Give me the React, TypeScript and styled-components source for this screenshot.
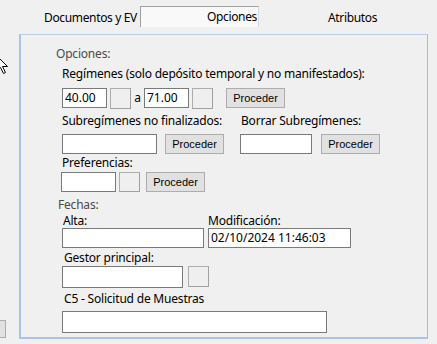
import styled, { createGlobalStyle } from "styled-components";

const GlobalStyle = createGlobalStyle`
    html, body {
        margin: 0;
        padding: 0;
        background: #f0f0f0;
    }
`;

const Page = styled.div`
    position: relative;
    width: 437px;
    height: 344px;
    overflow: hidden;
    background: #f0f0f0;
    display: flex;
    flex-direction: column;
    font-family: "Noto Sans", "Open Sans", sans-serif;
    font-size: 12px;
    letter-spacing: -0.2px;
    color: #000;
`;

const TabBar = styled.div`
    height: 34px;
    display: flex;
    align-items: flex-start;
    letter-spacing: -0.35px;
`;

const Tab = styled.div<{ $left: number; $w: number }>`
    margin-left: ${(p) => p.$left}px;
    width: ${(p) => p.$w}px;
    margin-top: 11px;
    line-height: 14px;
    white-space: nowrap;
`;

const ActiveTab = styled.div`
    margin-top: 6px;
    width: 119px;
    height: 21px;
    box-sizing: border-box;
    border-top: 1px solid #a0a0a0;
    border-left: 1px solid #a0a0a0;
    border-right: 1px solid #dadada;
    background: #f9f9f9;
    display: flex;
    align-items: center;
    justify-content: flex-end;
    padding-right: 1px;
    line-height: 14px;
`;

const Body = styled.div`
    display: flex;
    height: 306px;
`;

const Gutter = styled.div`
    width: 19px;
    display: flex;
    flex-direction: column;
    justify-content: flex-end;
    padding-bottom: 2px;
    box-sizing: border-box;
`;

const StubButton = styled.div`
    width: 5px;
    height: 16px;
    background: #e1e1e1;
    border: 1px solid #adadad;
    border-left: none;
`;

const Panel = styled.div`
    width: 409px;
    height: 305px;
    box-sizing: border-box;
    border-top: 1px solid #b9cde4;
    border-left: 2px solid #a9c4e4;
    border-right: 1px solid #aabdd4;
    border-bottom: 2px solid #a9c4e4;
    padding: 12px 0 0 41px;
    display: flex;
    flex-direction: column;
    align-items: flex-start;
`;

const Section = styled.div<{ $mt?: number }>`
    margin-left: -6px;
    margin-top: ${(p) => p.$mt ?? 0}px;
    line-height: 14px;
    color: #4a4a4a;
`;

const Label = styled.div<{ $mt?: number; $indent?: number }>`
    margin-top: ${(p) => p.$mt ?? 0}px;
    margin-left: ${(p) => p.$indent ?? 0}px;
    line-height: 14px;
    white-space: nowrap;
`;

const Row = styled.div<{ $mt?: number }>`
    margin-top: ${(p) => p.$mt ?? 0}px;
    display: flex;
    align-items: flex-start;
`;

const Group = styled.div<{ $ml?: number }>`
    margin-left: ${(p) => p.$ml ?? 0}px;
    display: flex;
    flex-direction: column;
    align-items: flex-start;
`;

const Input = styled.div<{ $w: number; $h?: number; $ml?: number; $mt?: number }>`
    width: ${(p) => p.$w}px;
    height: ${(p) => p.$h ?? 20}px;
    margin-left: ${(p) => p.$ml ?? 0}px;
    margin-top: ${(p) => p.$mt ?? 0}px;
    box-sizing: border-box;
    background: #fff;
    border: 1px solid #7a7a7a;
    padding-left: 2px;
    letter-spacing: 0;
    line-height: 18px;
    white-space: nowrap;
`;

const SquareButton = styled.div<{ $ml?: number; $h?: number }>`
    width: 21px;
    height: ${(p) => p.$h ?? 21}px;
    margin-left: ${(p) => p.$ml ?? 3}px;
    box-sizing: border-box;
    background: #efefef;
    border: 1px solid #adadad;
    border-right-color: #a0a0a0;
    border-bottom-color: #a0a0a0;
`;

const Button = styled.div<{ $ml: number; $h?: number }>`
    width: 59px;
    height: ${(p) => p.$h ?? 20}px;
    margin-left: ${(p) => p.$ml}px;
    box-sizing: border-box;
    background: #e1e1e1;
    border: 1px solid #adadad;
    font-family: "Liberation Sans", Arial, sans-serif;
    font-size: 11px;
    letter-spacing: 0;
    display: flex;
    align-items: center;
    justify-content: center;
`;

const Between = styled.div`
    width: 13px;
    text-align: center;
    line-height: 20px;
    letter-spacing: 0;
`;

const Cursor = styled.svg`
    position: absolute;
    left: -4px;
    top: 55px;
`;

const App = () => (
    <Page>
        <GlobalStyle />
        <TabBar>
            <Tab $left={44} $w={96}>Documentos y EV</Tab>
            <ActiveTab>Opciones</ActiveTab>
            <Tab $left={69} $w={60}>Atributos</Tab>
        </TabBar>
        <Body>
            <Gutter>
                <StubButton />
            </Gutter>
            <Panel>
                <Section>Opciones:</Section>
                <Label $mt={6}>Regímenes (solo depósito temporal y no manifestados):</Label>
                <Row $mt={7}>
                    <Input $w={45}>40.00</Input>
                    <SquareButton />
                    <Between>a</Between>
                    <Input $w={45}>71.00</Input>
                    <SquareButton />
                    <Button $ml={13}>Proceder</Button>
                </Row>
                <Row $mt={5}>
                    <Group>
                        <Label>Subregímenes no finalizados:</Label>
                        <Row $mt={6}>
                            <Input $w={95} />
                            <Button $ml={8}>Proceder</Button>
                        </Row>
                    </Group>
                    <Group $ml={16}>
                        <Label $indent={1}>Borrar Subregímenes:</Label>
                        <Row $mt={6}>
                            <Input $w={72} />
                            <Button $ml={9}>Proceder</Button>
                        </Row>
                    </Group>
                </Row>
                <Label $mt={2}>Preferencias:</Label>
                <Row $mt={2}>
                    <Input $w={55} $ml={-1} />
                    <SquareButton $h={20} />
                    <Button $ml={6}>Proceder</Button>
                </Row>
                <Section $mt={6}>
                    <Label $indent={2}>Fechas:</Label>
                </Section>
                <Row $mt={2}>
                    <Group>
                        <Label $indent={1}>Alta:</Label>
                        <Input $w={142} />
                    </Group>
                    <Group $ml={4}>
                        <Label>Modificación:</Label>
                        <Input $w={143}>02/10/2024 11:46:03</Input>
                    </Group>
                </Row>
                <Label $mt={3} $indent={2}>Gestor principal:</Label>
                <Row $mt={1}>
                    <Input $w={121} $h={22} />
                    <SquareButton $ml={5} />
                </Row>
                <Label $mt={4} $indent={2}>C5 - Solicitud de Muestras</Label>
                <Input $w={265} $h={22} $mt={5} />
            </Panel>
        </Body>
        <Cursor width="13" height="20" viewBox="0 0 13 20">
            <path
                d="M0.5 0.5 L0.5 16.5 L4.5 12.5 L7.5 18.5 L9.5 17.5 L6.5 11.5 L11.5 11.5 Z"
                fill="#fff"
                stroke="#000"
                strokeWidth="1"
            />
        </Cursor>
    </Page>
);

export default App;
